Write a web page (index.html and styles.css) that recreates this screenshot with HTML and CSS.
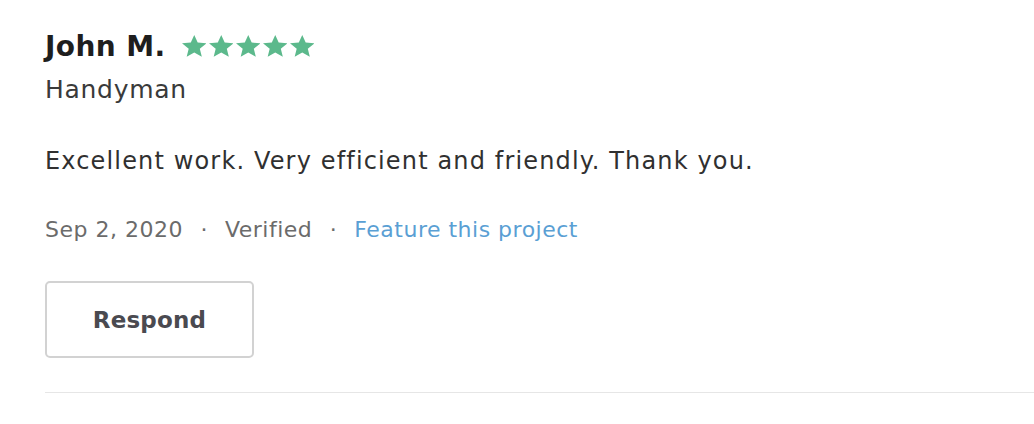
FILE: index.html
```html
<!DOCTYPE html>
<html>
<head>
<meta charset="utf-8">
<link rel="stylesheet" href="styles.css">
</head>
<body>
<div class="review">
  <div class="head">
    <span class="name">John M.</span>
    <span class="stars">
      <svg class="star" viewBox="2 2 20 19.3" preserveAspectRatio="none"><path d="M12 17.27L18.18 21l-1.64-7.03L22 9.240l-7.19-.61L12 2 9.19 8.63 2 9.24l5.460 4.73L5.82 21z"/></svg>
      <svg class="star" viewBox="2 2 20 19.3" preserveAspectRatio="none"><path d="M12 17.27L18.18 21l-1.64-7.03L22 9.24l-7.19-.61L12 2 9.19 8.63 2 9.24l5.46 4.73L5.82 21z"/></svg>
      <svg class="star" viewBox="2 2 20 19.3" preserveAspectRatio="none"><path d="M12 17.27L18.18 21l-1.64-7.03L22 9.24l-7.19-.61L12 2 9.19 8.63 2 9.24l5.46 4.73L5.82 21z"/></svg>
      <svg class="star" viewBox="2 2 20 19.3" preserveAspectRatio="none"><path d="M12 17.27L18.18 21l-1.64-7.03L22 9.24l-7.19-.61L12 2 9.19 8.63 2 9.24l5.46 4.73L5.82 21z"/></svg>
      <svg class="star" viewBox="2 2 20 19.3" preserveAspectRatio="none"><path d="M12 17.27L18.18 21l-1.64-7.03L22 9.24l-7.19-.61L12 2 9.19 8.63 2 9.24l5.46 4.73L5.82 21z"/></svg>
    </span>
  </div>
  <div class="category">Handyman</div>
  <p class="text">Excellent work. Very efficient and friendly. Thank you.</p>
  <div class="meta">
    <span>Sep 2, 2020</span>
    <span class="dot">·</span>
    <span>Verified</span>
    <span class="dot">·</span>
    <a class="link" href="#">Feature this project</a>
  </div>
  <button class="respond">Respond</button>
  <div class="divider"></div>
</div>
</body>
</html>
```

FILE: styles.css
```css
html, body {
  margin: 0;
  padding: 0;
  background: #fff;
}
body {
  font-family: "DejaVu Sans", sans-serif;
  color: #2b2b2b;
}
.review {
  padding: 30px 0 0 45px;
}
.head {
  display: flex;
  align-items: center;
  height: 34px;
}
.name {
  font-size: 28px;
  font-weight: 700;
  line-height: 34px;
  letter-spacing: 0.4px;
  color: #1e1e1e;
}
.stars {
  display: flex;
  gap: 2.5px;
  margin-left: 16px;
  margin-top: -3px;
}
.star {
  width: 24.5px;
  height: 22px;
  fill: #5cb98c;
}
.category {
  margin-top: 11px;
  font-size: 25px;
  line-height: 30px;
  letter-spacing: 0.7px;
  color: #3a3a3a;
}
.text {
  margin: 41px 0 0;
  font-size: 24px;
  line-height: 30px;
  letter-spacing: 1.15px;
  color: #303030;
}
.meta {
  margin-top: 40px;
  font-size: 22px;
  line-height: 28px;
  letter-spacing: 0.5px;
  color: #6b6b6b;
  display: flex;
}
.dot {
  width: 42px;
  text-align: center;
  letter-spacing: 0;
}
.link {
  color: #5a9fd4;
  text-decoration: none;
}
.respond {
  display: block;
  margin-top: 37px;
  width: 209px;
  height: 77px;
  border: 2px solid #d2d2d2;
  border-radius: 5px;
  background: #fff;
  font-family: "DejaVu Sans", sans-serif;
  font-size: 23px;
  font-weight: 700;
  letter-spacing: 0.2px;
  color: #4a4a50;
}
.divider {
  margin-top: 34px;
  height: 1px;
  background: #e6e6e6;
}
```
